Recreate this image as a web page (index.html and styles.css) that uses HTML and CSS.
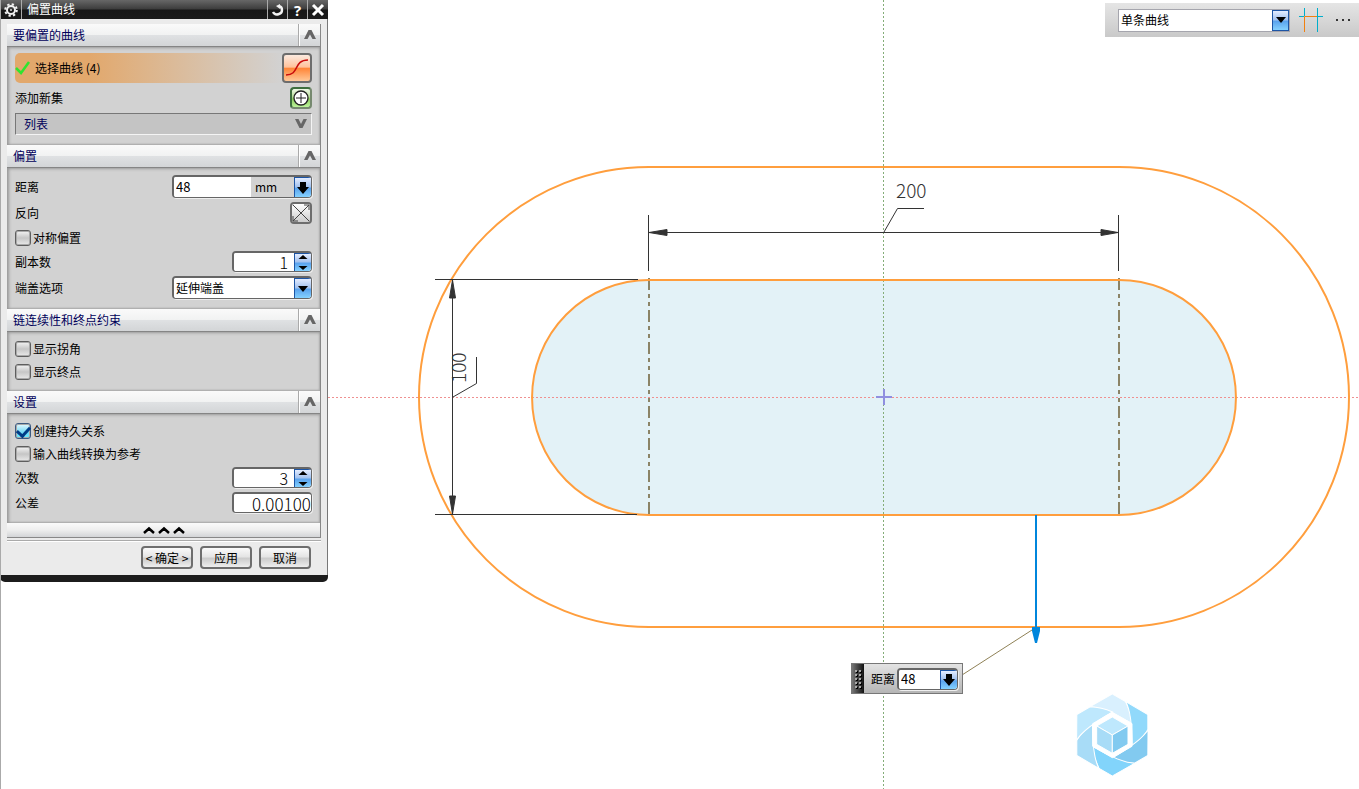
FILE: index.html
```html
<!DOCTYPE html>
<html lang="zh-CN">
<head>
<meta charset="utf-8">
<title>偏置曲线</title>
<link rel="stylesheet" href="styles.css">
</head>
<body>
<main class="workspace">
  <svg class="sketch" viewBox="0 0 1359 789" preserveAspectRatio="xMinYMin meet" role="img" aria-label="草图">
    <path class="profile-fill" d="M649 280H1119A117 117.500 0 0 1 1119 515H649A117 117.500 0 0 1 649 280Z"/>
    <path class="axis-y" d="M883.500 0V789"/>
    <path class="axis-x" d="M328 397.500H1359"/>
    <path class="reference" d="M649 278V515M1119 278V515"/>
    <path class="curve" d="M649 167H1119A230 230 0 0 1 1119 627H649A230 230 0 0 1 649 167Z"/>
    <path class="curve" d="M649 280H1119A117 117.500 0 0 1 1119 515H649A117 117.500 0 0 1 649 280Z"/>
    <path class="origin" d="M876 397H892M884 389V405"/>
    <g class="dimension">
      <path d="M648.500 215V271M1118.500 215V271M649 232.500H1118M435 279.500H638M435 514.500H637M452.500 280V514"/>
      <path class="leader" d="M884 232L897.500 208.500H924M453 397L476.500 383.500V357"/>
      <path class="head" d="M649 232.500L667 229.500V235.500ZM1118 232.500L1101 229.500V235.500ZM452.500 280L449.500 298H455.500ZM452.500 514L449.500 496H455.500Z"/>
      <text x="896" y="198">200</text>
      <text transform="translate(466 383) rotate(-90)">100</text>
    </g>
    <path class="drag-line" d="M1036 515V628"/>
    <path class="drag-head" d="M1032 627H1040V631L1037 643H1035L1032 631Z"/>
    <path class="drag-leader" d="M962 675L1032 630"/>
    <g transform="translate(1060 685) scale(.3333)" class="logo">
      <g id="blades">
        <path fill="#d9f0fe" d="M90 65Q131 66 217 116Q213 80 197 50L157 27Z"/>
        <path fill="#91d9fb" transform="rotate(60 157 150)" d="M90 65Q131 66 217 116Q213 80 197 50L157 27Z"/>
        <path fill="#82caf0" transform="rotate(120 157 150)" d="M90 65Q131 66 217 116Q213 80 197 50L157 27Z"/>
        <path fill="#82d4fb" transform="rotate(180 157 150)" d="M90 65Q131 66 217 116Q213 80 197 50L157 27Z"/>
        <path fill="#a8dcf7" transform="rotate(240 157 150)" d="M90 65Q131 66 217 116Q213 80 197 50L157 27Z"/>
        <path fill="#bee8fd" transform="rotate(300 157 150)" d="M90 65Q131 66 217 116Q213 80 197 50L157 27Z"/>
      </g>
      <path fill="#fff" stroke="none" d="M157 82L216 116V184L157 218L98 184V116Z"/>
      <path fill="#bee8fd" d="M157 96L204 123L157 150L110 123Z"/>
      <path fill="#a8dcf7" d="M110 123L157 150V205L110 178Z"/>
      <path fill="#82caf0" d="M204 123L157 150V205L204 178Z"/>
    </g>
  </svg>

  <form class="dialog">
    <header class="titlebar">
      <button type="button" class="tb-btn" aria-label="设置菜单">
        <svg width="16" height="16" viewBox="0 0 16 16"><g fill="none" stroke="#f2f2f2"><circle cx="8" cy="8" r="4" stroke-width="2"/><circle cx="8" cy="8" r="5.800" stroke-width="2" stroke-dasharray="2.300 2.255"/></g><circle cx="8" cy="8" r="1" fill="#ddd"/></svg>
      </button>
      <h1 class="title">偏置曲线</h1>
      <button type="button" class="tb-btn" aria-label="重置"><svg width="14" height="14" viewBox="0 0 14 14"><path d="M8 3C12 4 12 10 8 11C5 12 3 11 2 9" fill="none" stroke="#f2f2f2" stroke-width="2.400"/><path d="M5 3L9 1V6Z" fill="#f2f2f2"/></svg></button>
      <button type="button" class="tb-btn help" aria-label="帮助">?</button>
      <button type="button" class="tb-btn" aria-label="关闭"><svg width="14" height="14" viewBox="0 0 14 14"><path d="M2 2L12 12M12 2L2 12" stroke="#fff" stroke-width="3"/></svg></button>
    </header>

    <div class="frame">
      <div class="groups">
        <section>
          <h2 class="group-head"><span>要偏置的曲线</span><button type="button" class="fold" aria-label="折叠"><svg width="12" height="10" viewBox="0 0 12 10"><path d="M0 9H3.500L6 4.500L8.500 9H12L7.500 0H4.500Z"/></svg></button></h2>
          <div class="group-body first">
            <div class="select-row">
              <svg width="16" height="14" viewBox="0 0 16 14"><path d="M1 7L6 12L14 1" fill="none" stroke="#2fe52f" stroke-width="2.500"/></svg>
              <span>选择曲线 (4)</span>
              <button type="button" class="curve-btn" aria-label="选择曲线"><svg width="24" height="22" viewBox="0 0 24 22"><path d="M1 18C15 18 8 3 23 3" fill="none" stroke="#c90b0b" stroke-width="1.500"/></svg></button>
            </div>
            <div class="row">
              <span>添加新集</span>
              <button type="button" class="add-btn" aria-label="添加新集"><svg width="18" height="18" viewBox="0 0 18 18"><circle cx="9" cy="9" r="7" fill="#fff" stroke="#222" stroke-width="1.300"/><path d="M4 9H14M9 4V14" stroke="#222"/></svg></button>
            </div>
            <button type="button" class="list-bar"><span>列表</span><svg width="12" height="10" viewBox="0 0 12 10"><path fill="#666" d="M0 0H3.500L6 5L8.500 0H12L7.500 9H4.500Z"/></svg></button>
          </div>
        </section>

        <section>
          <h2 class="group-head"><span>偏置</span><button type="button" class="fold" aria-label="折叠"><svg width="12" height="10" viewBox="0 0 12 10"><path d="M0 9H3.500L6 4.500L8.500 9H12L7.500 0H4.500Z"/></svg></button></h2>
          <div class="group-body">
            <div class="row">
              <label for="distance">距离</label>
              <div class="field wide">
                <input id="distance" value="48"><span class="unit">mm</span>
                <button type="button" class="blue" aria-label="距离选项"><svg width="14" height="14" viewBox="0 0 14 14"><path d="M4 1H10V6H13L7 13L1 6H4Z"/></svg></button>
              </div>
            </div>
            <div class="row">
              <span>反向</span>
              <button type="button" class="flip-btn" aria-label="反向"><svg width="18" height="18" viewBox="0 0 18 18"><path d="M1 1L17 17M1 17L17 1M12 1H17V6M1 12V17H6" fill="none" stroke="#444"/></svg></button>
            </div>
            <label class="check"><input type="checkbox">对称偏置</label>
            <div class="row">
              <label for="copies">副本数</label>
              <div class="field narrow">
                <input id="copies" class="number" value="1">
                <span class="blue"><svg width="14" height="17" viewBox="0 0 14 17"><path d="M7 1L11.500 5H2.500ZM7 16L11.500 12H2.500Z"/></svg></span>
              </div>
            </div>
            <div class="row">
              <label for="cap">端盖选项</label>
              <div class="field wide">
                <select id="cap"><option>延伸端盖</option></select>
                <span class="blue"><svg width="14" height="14" viewBox="0 0 14 14"><path d="M2 4H12L7 10Z"/></svg></span>
              </div>
            </div>
          </div>
        </section>

        <section>
          <h2 class="group-head"><span>链连续性和终点约束</span><button type="button" class="fold" aria-label="折叠"><svg width="12" height="10" viewBox="0 0 12 10"><path d="M0 9H3.500L6 4.500L8.500 9H12L7.500 0H4.500Z"/></svg></button></h2>
          <div class="group-body">
            <label class="check"><input type="checkbox">显示拐角</label>
            <label class="check"><input type="checkbox">显示终点</label>
          </div>
        </section>

        <section>
          <h2 class="group-head"><span>设置</span><button type="button" class="fold" aria-label="折叠"><svg width="12" height="10" viewBox="0 0 12 10"><path d="M0 9H3.500L6 4.500L8.500 9H12L7.500 0H4.500Z"/></svg></button></h2>
          <div class="group-body">
            <label class="check"><input type="checkbox" checked>创建持久关系</label>
            <label class="check"><input type="checkbox">输入曲线转换为参考</label>
            <div class="row">
              <label for="degree">次数</label>
              <div class="field narrow">
                <input id="degree" class="number" value="3">
                <span class="blue"><svg width="14" height="17" viewBox="0 0 14 17"><path d="M7 1L11.500 5H2.500ZM7 16L11.500 12H2.500Z"/></svg></span>
              </div>
            </div>
            <div class="row">
              <label for="tolerance">公差</label>
              <div class="field narrow"><input id="tolerance" class="tolerance" value="0.00100"></div>
            </div>
          </div>
        </section>
        <button type="button" class="collapse" aria-label="收起"><svg width="42" height="8" viewBox="0 0 42 8"><path fill="none" stroke="#000" stroke-width="2.500" d="M1 7L6 2.500L11 7M16 7L21 2.500L26 7M31 7L36 2.500L41 7"/></svg></button>
      </div>
      <footer class="actions">
        <button type="submit">&lt; 确定 &gt;</button>
        <button type="button">应用</button>
        <button type="button">取消</button>
      </footer>
    </div>
  </form>

  <div class="toolbar">
    <div class="filter">
      <select aria-label="曲线规则"><option>单条曲线</option></select>
      <span class="blue"><svg width="14" height="14" viewBox="0 0 14 14"><path d="M2 4H12L7 10Z"/></svg></span>
    </div>
    <button type="button" aria-label="在相交处停止"><svg width="24" height="24" viewBox="0 0 24 24"><path d="M0 8.500H5M18 8.500H24M18.500 0V24M5.500 0V8" stroke="#00aecb" fill="none"/><path d="M5.500 24V8.500H18" stroke="#f08010" fill="none"/></svg></button>
    <button type="button" aria-label="更多"><svg width="16" height="4" viewBox="0 0 16 4"><path fill="#333" d="M1 1H3V3H1ZM7 1H9V3H7ZM13 1H15V3H13Z"/></svg></button>
  </div>

  <div class="quick">
    <svg class="grip" width="12" height="29" viewBox="0 0 12 29"><path d="M4 6V26M8 6V26" stroke="#000" stroke-width="2" stroke-dasharray="2 2" transform="translate(1 1)"/><path d="M4 6V26M8 6V26" stroke="#aaa" stroke-width="2" stroke-dasharray="2 2"/></svg>
    <label for="quick-distance">距离</label>
    <div class="field">
      <input id="quick-distance" value="48">
      <button type="button" class="blue" aria-label="距离选项"><svg width="14" height="14" viewBox="0 0 14 14"><path d="M4 1H10V6H13L7 13L1 6H4Z"/></svg></button>
    </div>
  </div>
</main>
</body>
</html>
```
FILE: styles.css
```css
* { box-sizing: border-box; }
body { margin: 0; background: #fff; }
body, button, input, select {
  font: 12px/16px "Noto Sans CJK SC", "Noto Sans", sans-serif;
  color: #000;
}
button { padding: 0; border: 0; background: none; }
svg { display: block; flex: none; }
h1, h2 { margin: 0; font-size: 12px; font-weight: 400; }

.workspace {
  position: relative;
  display: flex;
  justify-content: space-between;
  align-items: flex-start;
  min-height: 100vh;
  overflow: hidden;
  border-left: 1px solid #aaa;
}

/* Drawing canvas */
.sketch { position: absolute; inset: 0 0 auto -1px; width: 100vw; height: 100vh; }
.profile-fill { fill: #e3f2f7; }
.axis-y, .axis-x { fill: none; stroke-dasharray: 2 2; }
.axis-y { stroke: #84ad78; }
.axis-x { stroke: #ef9090; }
.axis-y, .axis-x, .reference, .drag-line { shape-rendering: crispEdges; }
.reference { stroke: #8b8467; stroke-width: 2; stroke-dasharray: 12 4 4 4 4 4; }
.curve { fill: none; stroke: #ff9e3d; stroke-width: 2; }
.origin { stroke: #9090e0; stroke-width: 2; }
.dimension path { fill: none; stroke: #333; }
.dimension .head { fill: #333; }
.dimension text { fill: #333; font: 300 19px "Noto Sans CJK SC", sans-serif; }
.drag-line { stroke: #0086dc; stroke-width: 2; }
.drag-head { fill: #0086dc; }
.drag-leader { stroke: #8f8156; }
.logo path { stroke: #fff; stroke-width: 3; }

/* Dialog */
.dialog {
  position: relative;
  width: 328px;
  margin-left: -1px;
  border-bottom: 7px solid #1c1c1c;
  border-radius: 0 0 5px 5px;
}
.titlebar {
  display: flex;
  height: 19px;
  padding-right: 1px;
  background: linear-gradient(#676767, #3c3c3c 48%, #171717 52%, #1b1b1b);
}
.title { flex: 1; padding-left: 5px; line-height: 18px; color: #fff; border-left: 1px solid #aaa; }
.tb-btn { display: grid; place-items: center; width: 21px; color: #fff; }
.title ~ .tb-btn { width: 20px; border-left: 1px solid #aaa; }
.tb-btn.help { font: bold 15px/18px "Open Sans", sans-serif; }
.frame {
  padding: 5px 6px;
  background: #ebebeb;
  border: solid #777;
  border-width: 0 1px;
}
.groups { border-right: 1px solid #888; border-bottom: 1px solid #888; }
.group-head {
  display: flex;
  height: 23px;
  line-height: 22px;
  padding-left: 6px;
  color: #00005a;
  background: linear-gradient(#fafafa, #f1f2f2 50%, #dfe1e3 52%, #d3d5d7);
  border-bottom: 1px solid #858585;
}
.group-head span { flex: 1; }
.fold { display: grid; place-items: center; width: 22px; border-left: 1px solid #aaa; box-shadow: inset 1px 0 #fff; }
.fold path { fill: #666; }
.group-body {
  display: flex;
  flex-direction: column;
  gap: 4px;
  padding: 7px 8px 10px;
  background: #d2d2d2;
  box-shadow: inset 2px 1px 3px #999, inset -1px -1px 2px #aaa;
}
.group-body.first { padding-top: 6px; }
.row, .select-row { display: flex; align-items: center; justify-content: space-between; }
.select-row {
  height: 30px;
  justify-content: flex-start;
  gap: 4px;
  border-radius: 5px;
  background: linear-gradient(90deg, #e2a86c 25%, #d2d2d2 90%);
}
.curve-btn, .add-btn, .flip-btn {
  display: grid;
  place-items: center;
  width: 22px;
  height: 22px;
  border: 2px solid #6d6d6d;
  border-radius: 4px;
}
.curve-btn {
  width: 30px;
  height: 30px;
  margin-left: auto;
  background: linear-gradient(#fbeadf, #ffc29c 46%, #ff8639 52%, #ffc898);
}
.add-btn { background: linear-gradient(#f0fae8, #b5dc96 45%, #8bce5d 55%, #bdf49b); border-color: #3d6e3d #76896f #76896f #3d6e3d; }
.flip-btn { background: linear-gradient(#fff, #ccc); }
.list-bar {
  display: flex;
  align-items: center;
  justify-content: space-between;
  height: 22px;
  padding: 0 4px 0 8px;
  color: #00005a;
  background: #c4c4c4;
  border: 1px solid #888;
  border-color: #777 #f4f4f4 #f4f4f4 #777;
}

/* Fields */
.field {
  display: flex;
  height: 23px;
  background: #fff;
  border: solid #666;
  border-width: 2px 1px 1px 2px;
  border-radius: 4px;
  box-shadow: 1px 1px #eee;
  overflow: hidden;
}
.field.wide { width: 140px; }
.field.narrow { width: 80px; height: 21px; }
.field input, .field select, .filter select {
  flex: 1;
  min-width: 0;
  padding: 0 2px;
  border: 0;
  outline: 0;
  appearance: none;
  background: #fff;
}
.field input { font-size: 13px; }
.field .number { text-align: right; padding-right: 6px; font-size: 16px; font-weight: 300; }
.field .tolerance { padding: 0 0 0 18px; font-size: 17px; font-weight: 300; }
.unit { width: 43px; padding-left: 4px; line-height: 20px; background: #d2d2d2; }
.blue {
  display: grid;
  place-items: center;
  width: 17px;
  border: 1px solid #1d55a5;
  border-width: 1px 0 0 1px;
  background: linear-gradient(#e3ecff, #a5c3ef 45%, #5ba4ee 55%, #84d1ff);
}
.check { display: flex; align-items: center; gap: 2px; height: 19px; }
.check input {
  display: grid;
  place-items: center;
  width: 16px;
  height: 16px;
  margin: 0;
  appearance: none;
  border: 1px solid #5e5e5e;
  border-radius: 3px;
  box-shadow: inset 0 0 0 1px #aaa;
  background: linear-gradient(#f4f4f4, #c6c6c6 50%, #e9e9e9);
}
.check input:checked { background: linear-gradient(#e7faff, #72d8f5 60%, #63ecff); border-color: #3c5a80; }
.check input:checked::after {
  content: "";
  width: 6px;
  height: 10px;
  border: solid #003c86;
  border-width: 0 3px 3px 0;
  transform: rotate(42deg);
}

.collapse {
  display: grid;
  place-items: center;
  width: 100%;
  height: 14px;
  background: linear-gradient(#fafafa, #eee 50%, #d3d5d7);
}
.actions {
  display: flex;
  justify-content: flex-end;
  gap: 7px;
  margin-top: 2px;
  padding: 5px 10px 1px 0;
  border-top: 1px solid #aaa;
  box-shadow: inset 0 1px #fff;
}
.actions button {
  width: 52px;
  height: 23px;
  border: 2px solid #6e6e6e;
  border-radius: 4px;
  white-space: nowrap;
  background: linear-gradient(#fafafa, #e5e5e5 45%, #ccc 55%, #eee);
}

/* Selection toolbar */
.toolbar {
  position: relative;
  display: flex;
  align-items: center;
  gap: 9px;
  width: 254px;
  height: 34px;
  margin-top: 3px;
  padding: 0 8px 0 13px;
  background: linear-gradient(#e5e5e5, #c9c9c9);
}
.filter { display: flex; flex: 1; height: 23px; background: #fff; border: 1px solid #a5a5ad; }
.filter .blue { border-width: 1px; }
.toolbar > button:last-child { margin-left: 3px; }

/* On-canvas input */
.quick {
  position: absolute;
  left: 850px;
  top: 663px;
  display: flex;
  align-items: center;
  width: 112px;
  height: 31px;
  padding-right: 4px;
  background: linear-gradient(#e3e3e3, #b5b5b5);
  border: 1px solid #777;
}
.grip { margin-right: 7px; background: linear-gradient(90deg, #777, #111); }
.quick .field { flex: 1; height: 22px; margin-left: 2px; }
```
